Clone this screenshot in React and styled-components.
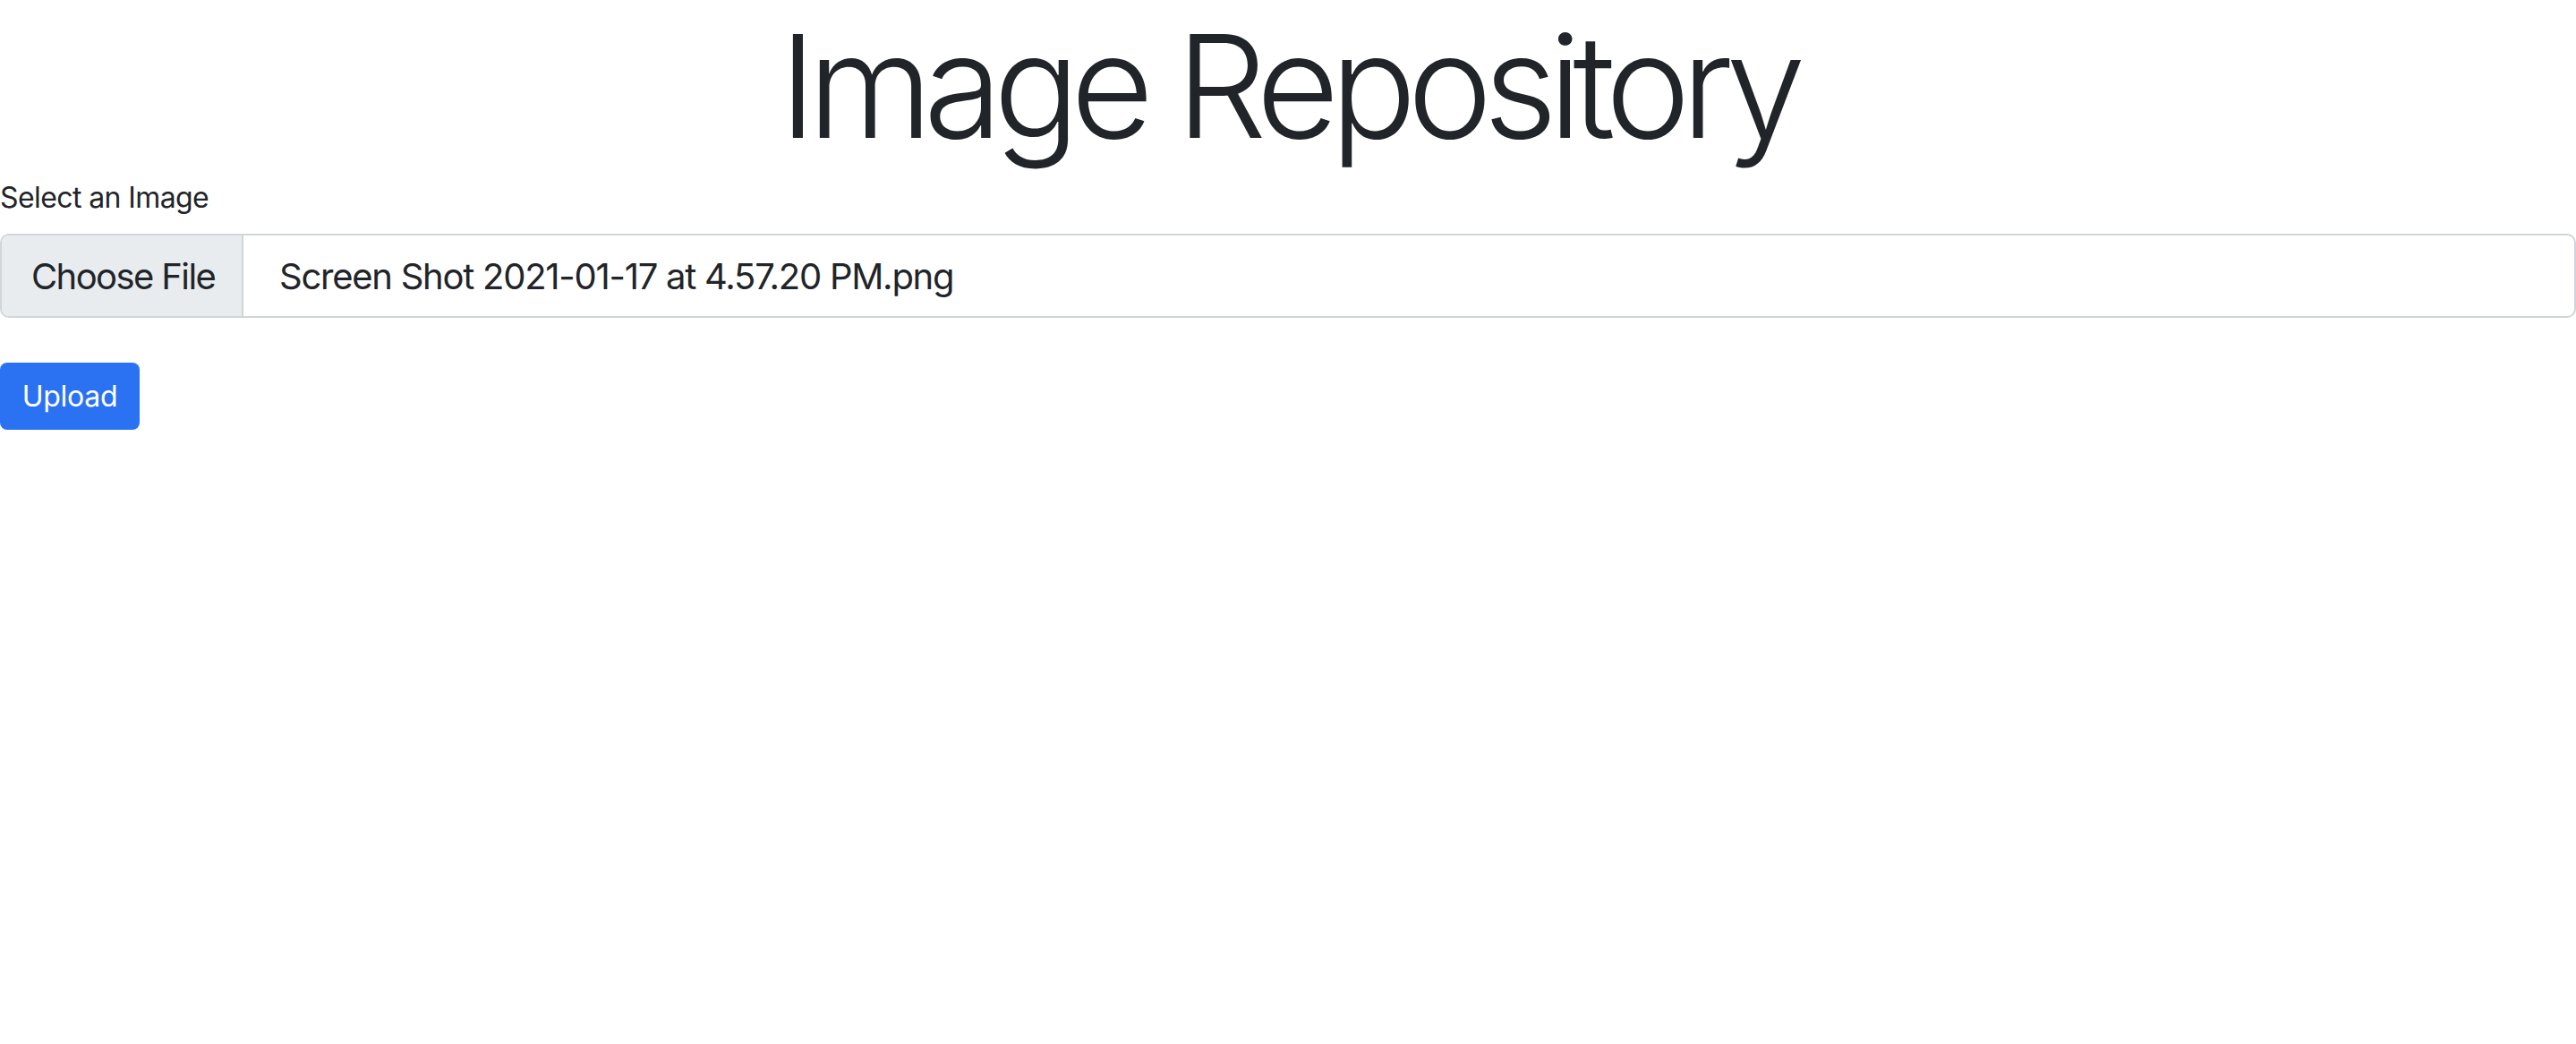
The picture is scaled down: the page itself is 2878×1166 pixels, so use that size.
import React from "react";
import styled, { createGlobalStyle } from "styled-components";

const Global = createGlobalStyle`
  html, body { margin: 0; padding: 0; background: #fff; }
  body {
    font-family: Inter, "Noto Sans", "Liberation Sans", sans-serif;
    color: #212529;
  }
  * { box-sizing: border-box; }
`;

const Page = styled.main`
  display: flex;
  flex-direction: column;
  align-items: stretch;
`;

const Title = styled.h1`
  margin: 0 0 5px;
  text-align: center;
  font-size: 160px;
  font-weight: 300;
  line-height: 192px;
  letter-spacing: -10px;
  color: #212529;
`;

const Form = styled.form`
  display: flex;
  flex-direction: column;
  align-items: flex-start;
`;

const Label = styled.label`
  display: block;
  font-size: 32px;
  line-height: 48px;
  letter-spacing: -0.6px;
  margin-bottom: 16px;
`;

const FileField = styled.div`
  display: flex;
  align-items: stretch;
  width: 100%;
  height: 94px;
  border: 2px solid #d0d5da;
  border-radius: 10px;
  overflow: hidden;
  font-size: 40px;
`;

const FileButton = styled.div`
  display: flex;
  align-items: center;
  width: 270px;
  padding: 0 0 0 33px;
  background: #e9ecef;
  border-right: 2px solid #d0d5da;
  color: #212529;
  letter-spacing: -1.6px;
  white-space: nowrap;
`;

const FileName = styled.div`
  display: flex;
  align-items: center;
  padding-left: 40px;
  color: #212529;
  letter-spacing: -1.25px;
  white-space: nowrap;
`;

const Button = styled.button`
  margin-top: 50px;
  width: 156px;
  height: 75px;
  border: none;
  border-radius: 8px;
  background: #2b72f3;
  color: #fff;
  font-family: inherit;
  font-size: 32px;
  line-height: 48px;
  letter-spacing: -0.3px;
  padding: 0;
  cursor: pointer;
`;

export default function App() {
  return (
    <Page>
      <Global />
      <Title>Image Repository</Title>
      <Form onSubmit={(e) => e.preventDefault()}>
        <Label>Select an Image</Label>
        <FileField>
          <FileButton>Choose File</FileButton>
          <FileName>Screen Shot 2021-01-17 at 4.57.20 PM.png</FileName>
        </FileField>
        <Button type="submit">Upload</Button>
      </Form>
    </Page>
  );
}
